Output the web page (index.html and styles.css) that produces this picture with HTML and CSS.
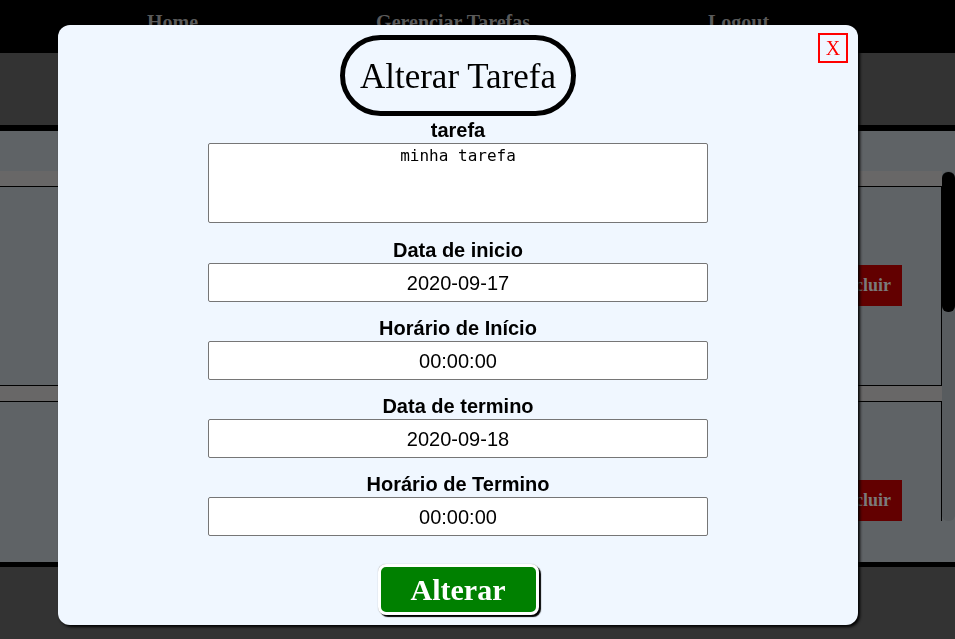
FILE: index.html
```html
<!DOCTYPE html>
<html lang="pt-BR">
<head>
<meta charset="utf-8">
<title>Alterar Tarefa</title>
<link rel="stylesheet" href="styles.css">
</head>
<body>
<nav class="topnav">
  <a class="nav-link">Home</a>
  <a class="nav-link">Gerenciar Tarefas</a>
  <a class="nav-link">Logout</a>
</nav>
<header class="banner"></header>
<main class="content">
  <div class="list-wrap">
    <div class="list">
      <div class="item">
        <div class="item-band"></div>
        <div class="card"><span class="btn-excluir">Excluir</span></div>
      </div>
      <div class="item">
        <div class="item-band"></div>
        <div class="card"><span class="btn-excluir">Excluir</span></div>
      </div>
    </div>
    <div class="scrollbar"><div class="thumb"></div></div>
  </div>
</main>
<footer class="footer"></footer>

<div class="modal">
  <span class="close">X</span>
  <h1 class="modal-title">Alterar Tarefa</h1>
  <form class="form">
    <label class="field-label label-first">tarefa</label>
    <textarea class="field-area">minha tarefa</textarea>
    <label class="field-label">Data de inicio</label>
    <input class="field-input" type="text" value="2020-09-17">
    <label class="field-label">Horário de Início</label>
    <input class="field-input" type="text" value="00:00:00">
    <label class="field-label">Data de termino</label>
    <input class="field-input" type="text" value="2020-09-18">
    <label class="field-label">Horário de Termino</label>
    <input class="field-input" type="text" value="00:00:00">
    <button class="btn-alterar" type="button">Alterar</button>
  </form>
</div>
</body>
</html>
```

FILE: styles.css
```css
* { box-sizing: border-box; }

html, body {
  margin: 0;
  padding: 0;
  height: 100%;
  overflow: hidden;
}

body {
  font-family: "Liberation Serif", serif;
  background: #333333;
}

.topnav {
  height: 53px;
  background: #000;
  display: flex;
  gap: 178px;
  padding: 11px 0 0 147px;
}

.nav-link {
  font-family: "Liberation Serif", serif;
  font-weight: bold;
  font-size: 20px;
  line-height: 23px;
  color: #5a5a5a;
}

.banner {
  height: 78px;
  background: #333333;
  border-bottom: 6px solid #000;
}

.content {
  background: #5f6366;
  padding: 40px 0 41px 0;
  border-bottom: 5px solid #000;
}

.list-wrap {
  display: flex;
  height: 350px;
}

.list {
  width: 942px;
  overflow: hidden;
}

.item-band {
  height: 15px;
  background: #686767;
}

.card {
  height: 200px;
  border: 1px solid #000;
  border-left: none;
  display: flex;
  justify-content: flex-end;
  align-items: center;
  padding: 0 39px 2px 0;
}

.btn-excluir {
  display: inline-block;
  width: 79px;
  height: 41px;
  line-height: 41px;
  background: #620000;
  color: #7a7a7a;
  font-family: "Liberation Serif", serif;
  font-weight: bold;
  font-size: 18px;
  text-align: center;
}

.scrollbar {
  width: 13px;
  background: #585c5f;
  border-radius: 6px;
  padding-top: 1px;
}

.thumb {
  height: 140px;
  background: #000;
  border-radius: 6px;
}

.footer {
  height: 80px;
  background: #333333;
}

.modal {
  position: fixed;
  left: 58px;
  top: 25px;
  width: 800px;
  height: 600px;
  background: #f0f7ff;
  border-radius: 12px;
  box-shadow: 2px 2px 3px rgba(0, 0, 0, 0.95);
  padding-top: 10px;
  text-align: center;
}

.close {
  position: absolute;
  top: 8px;
  right: 10px;
  width: 30px;
  height: 30px;
  border: 2px solid #ff0000;
  color: #ff0000;
  font-family: "Liberation Serif", serif;
  font-size: 20px;
  line-height: 26px;
  text-align: center;
}

.modal-title {
  display: inline-block;
  margin: 0;
  font-family: "Liberation Serif", serif;
  font-weight: normal;
  font-size: 35px;
  line-height: 39px;
  padding: 17px 15px 15px 15px;
  border: 5px solid #000;
  border-radius: 45px;
  color: #000;
}

.form {
  width: 500px;
  margin: 0 auto;
  display: flex;
  flex-direction: column;
  align-items: center;
}

.field-label {
  display: block;
  font-family: "Liberation Sans", Arial, sans-serif;
  font-weight: bold;
  font-size: 20px;
  line-height: 23px;
  color: #000;
  padding-top: 1px;
  margin-bottom: 1px;
}

.label-first {
  margin-top: 2px;
}

.field-area {
  display: block;
  width: 500px;
  height: 80px;
  margin: 0 0 15px 0;
  padding: 2px;
  border: 1px solid #767676;
  border-radius: 2px;
  background: #fff;
  resize: none;
  font-family: "DejaVu Sans Mono", monospace;
  font-size: 16px;
  line-height: 19px;
  text-align: center;
  color: #000;
}

.field-input {
  display: block;
  width: 500px;
  height: 39px;
  margin: 0 0 14px 0;
  padding: 1px 2px 0 2px;
  border: 1px solid #767676;
  border-radius: 2px;
  background: #fff;
  font-family: "Liberation Sans", Arial, sans-serif;
  font-size: 20px;
  text-align: center;
  color: #000;
}

.btn-alterar {
  margin-top: 14px;
  width: 161px;
  height: 51px;
  padding: 0;
  border: 3px solid #fff;
  border-radius: 8px;
  background: #008000;
  color: #fff;
  font-family: "Liberation Serif", serif;
  font-weight: bold;
  font-size: 30px;
  line-height: 40px;
  box-shadow: 2px 2px 1px #000, 0 0 1px #999;
}
```
